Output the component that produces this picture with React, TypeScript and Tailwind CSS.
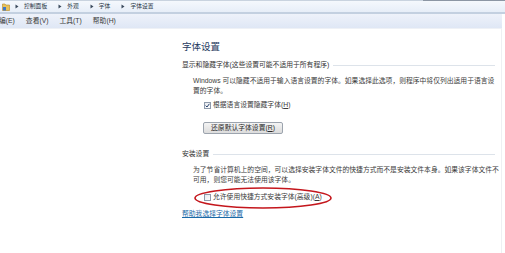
import React from "react";

const font = { fontFamily: '"Liberation Sans", "Noto Sans CJK SC", sans-serif' };

const crumbs = ["控制面板", "外观", "字体", "字体设置"];
const menus = ["编(E)", "查看(V)", "工具(T)", "帮助(H)"];

function Arrow() {
  return (
    <svg width="4" height="5" viewBox="0 0 4 5" className="shrink-0">
      <path d="M0.5 0.5 L3.5 2.5 L0.5 4.5 Z" fill="#3b4a5c" />
    </svg>
  );
}

function Check({ checked }: { checked?: boolean }) {
  return (
    <div className="w-[7px] h-[7px] shrink-0 border border-[#8e9aab] bg-gradient-to-br from-[#e6e9ee] to-[#fdfdfd] flex items-center justify-center">
      {checked && (
        <svg width="5" height="5" viewBox="0 0 5 5">
          <path d="M0.6 2.6 L2 4 L4.4 0.8" fill="none" stroke="#26426e" strokeWidth="1" />
        </svg>
      )}
    </div>
  );
}

function Section({ title }: { title: string }) {
  return (
    <div className="flex items-center gap-[4px] h-[10px] leading-[10px] text-[6.8px] text-[#333] pr-[10px]">
      <span className="whitespace-nowrap">{title}</span>
      <div className="flex-1 h-px bg-[#dde3ea]" />
    </div>
  );
}

export default function App() {
  return (
    <div className="w-[505px] h-[253px] overflow-hidden bg-white relative" style={font}>
      {/* address bar */}
      <div className="h-[14px] flex border-b-[2px] border-[#c3d0e0] bg-gradient-to-b from-[#f6f9fd] to-[#e7eef8]">
        <div className="w-[423px] flex items-center pl-[2px] border-t border-[#c9d3df]">
          <svg width="8" height="9" viewBox="0 0 8 9" className="shrink-0 mr-[5px]">
            <path d="M0.5 2 H3 L3.8 3 H7.5 V8.5 H0.5 Z" fill="#e8c25a" stroke="#b58a26" strokeWidth="0.6" />
            <rect x="1" y="5" width="3" height="3.5" fill="#3f78c8" />
          </svg>
          {crumbs.map((c) => (
            <div key={c} className="flex items-center gap-[5px] mr-[11px]">
              <Arrow />
              <span className="text-[5.8px] leading-none text-[#2a3646] whitespace-nowrap">{c}</span>
            </div>
          ))}
        </div>
        <div className="flex-1 border-t border-[#8c96a4]" />
      </div>

      {/* menu bar */}
      <div className="h-[15px] flex items-center gap-[11px] bg-gradient-to-b from-[#eef2fa] to-[#dfe7f5] border-b border-[#eef1f6] text-[6.8px] text-[#3a3a3a] mr-[3px]">
        {menus.map((m, i) => (
          <span key={m} className={i === 0 ? "-ml-[1px] whitespace-nowrap" : "whitespace-nowrap"}>{m}</span>
        ))}
      </div>

      {/* content */}
      <div className="absolute right-[3px] top-[29px] bottom-0 w-px bg-[#eef0f3]" />
      <div className="pl-[182px] flex flex-col">
        <div className="mt-[12px] text-[9.5px] leading-[12px] text-[#1e3a5e]">字体设置</div>

        <div className="mt-[7px]">
          <Section title="显示和隐藏字体(这些设置可能不适用于所有程序)" />
        </div>

        <div className="mt-[6px] pl-[11px] text-[6.8px] leading-[10px] text-[#3a3a3a] whitespace-nowrap">
          Windows 可以隐藏不适用于输入语言设置的字体。如果选择此选项，则程序中将仅列出适用于语言设
          <br />
          置的字体。
        </div>

        <div className="mt-[4px] pl-[22px] h-[10px] flex items-center gap-[2px] text-[6.8px] text-[#3a3a3a]">
          <Check checked />
          <span className="whitespace-nowrap">
            根据语言设置隐藏字体(<span className="underline">H</span>)
          </span>
        </div>

        <div className="mt-[12px] pl-[21px]">
          <div className="w-[80px] h-[12px] rounded-[2px] border border-[#9ca4ae] bg-gradient-to-b from-[#f4f4f4] to-[#dcdcdc] flex items-center justify-center text-[6.8px] text-[#2a2a2a] whitespace-nowrap">
            还原默认字体设置(<span className="underline">R</span>)
          </div>
        </div>

        <div className="mt-[15px]">
          <Section title="安装设置" />
        </div>

        <div className="mt-[6px] pl-[11px] text-[6.8px] leading-[10px] text-[#3a3a3a] whitespace-nowrap">
          为了节省计算机上的空间，可以选择安装字体文件的快捷方式而不是安装文件本身。如果该字体文件不
          <br />
          可用，则您可能无法使用该字体。
        </div>

        <div className="mt-[7px] pl-[22px] h-[10px] flex items-center gap-[2px] text-[6.8px] text-[#3a3a3a] relative">
          <Check />
          <span className="whitespace-nowrap">
            允许使用快捷方式安装字体(高级)(<span className="underline">A</span>)
          </span>
          <svg
            width="140"
            height="24"
            viewBox="0 0 140 24"
            className="absolute left-[11px] top-[-6px] pointer-events-none"
          >
            <ellipse cx="70" cy="12" rx="68" ry="10" fill="none" stroke="#c4161c" strokeWidth="1.6" />
          </svg>
        </div>

        <div className="mt-[7px] text-[6.8px] leading-[10px] text-[#1a6aa8] underline whitespace-nowrap">
          帮助我选择字体设置
        </div>
      </div>
    </div>
  );
}
